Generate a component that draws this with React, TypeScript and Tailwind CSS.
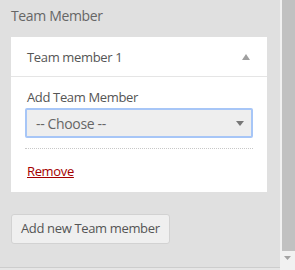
import React from 'react';

const font = { fontFamily: '"Open Sans", "Noto Sans", sans-serif' };

const App: React.FC = () => {
  return (
    <div style={font} className="flex h-[270px] w-[295px] overflow-hidden bg-[#e0e0e0] text-[13px] tracking-[-0.35px] text-[#555]">
      <div className="flex flex-1 flex-col">
        <div className="flex-1 px-[11px] pt-[6px]">
          <h3 className="text-[14px] leading-[20px] text-[#666]">Team Member</h3>

          <div className="mt-[11px] w-[256px] bg-white">
            <div className="flex h-[40px] items-center justify-between border-b border-[#e5e5e5] pl-[16px] pr-[17px] pt-[2px]">
              <span className="text-[#555]">Team member 1</span>
              <svg width="8" height="6" viewBox="0 0 8 6" className="-mt-[2px]">
                <path d="M4 0 L8 6 L0 6 Z" fill="#a0a0a0" />
              </svg>
            </div>

            <div className="px-[14px] pb-[12px] pt-[11px]">
              <label className="block pl-[2px] leading-[19px] text-[#555]">Add Team Member</label>
              <div className="mt-[1px] flex h-[30px] items-center justify-between rounded-[2px] border-2 border-[#a7c6f7] bg-[#eeeeee] pl-[9px] pr-[7px]">
                <span className="text-[14px] text-[#666]">-- Choose --</span>
                <svg width="8" height="5" viewBox="0 0 8 5">
                  <path d="M0 0 L8 0 L4 5 Z" fill="#777" />
                </svg>
              </div>
              <div className="mt-[10px] border-t border-dotted border-[#c8c8c8]" />
              <a href="#" className="mt-[13px] block pl-[2px] leading-[18px] text-[#a40000] underline">
                Remove
              </a>
            </div>
          </div>

          <button className="mt-[22px] h-[30px] rounded-[3px] border border-[#d2d2d2] bg-[#efefef] px-[9px] text-[13px] text-[#555]">
            Add new Team member
          </button>
        </div>
        <div className="h-px bg-[#cdcdcd]" />
        <div className="h-[2px] bg-[#e6e6e6]" />
      </div>

      <div className="flex w-[15px] flex-col bg-[#f1f1f1]">
        <div className="ml-[2px] h-[251px] bg-[#c1c1c1]" />
        <div className="flex flex-1 items-start justify-center pt-[5px]">
          <svg width="7" height="4" viewBox="0 0 7 4">
            <path d="M0 0 L7 0 L3.5 4 Z" fill="#a3a3a3" />
          </svg>
        </div>
      </div>
    </div>
  );
};

export default App;
